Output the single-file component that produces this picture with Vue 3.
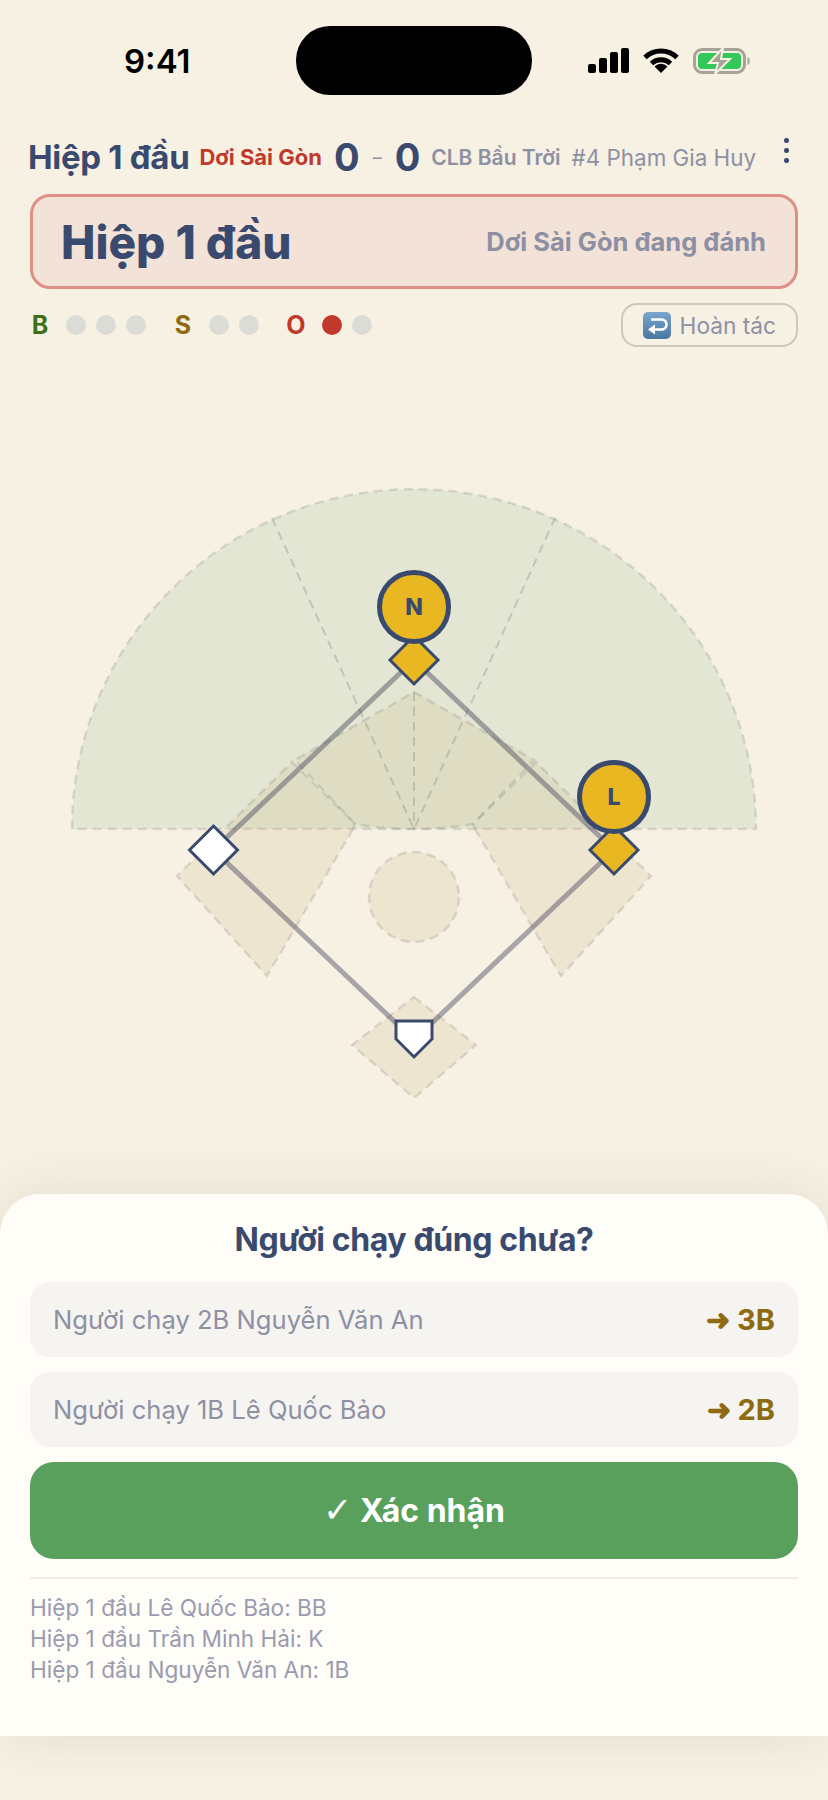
<script setup>
const counts = [
  { label: 'B', cls: 'ball', dots: [0, 0, 0] },
  { label: 'S', cls: 'strike', dots: [0, 0] },
  { label: 'O', cls: 'out', dots: [1, 0] }
]

const runners = [
  { label: 'Người chạy 2B Nguyễn Văn An', to: '➜ 3B' },
  { label: 'Người chạy 1B Lê Quốc Bảo', to: '➜ 2B' }
]

const logs = [
  'Hiệp 1 đầu Lê Quốc Bảo: BB',
  'Hiệp 1 đầu Trần Minh Hải: K',
  'Hiệp 1 đầu Nguyễn Văn An: 1B'
]

// field coordinates, svg starts at y = 360 on the page
const bases = [
  { x: 414, y: 300, on: true },
  { x: 614, y: 490, on: true },
  { x: 213.5, y: 490, on: false }
]
const markers = [
  { x: 414, y: 247, t: 'N' },
  { x: 614, y: 437, t: 'L' }
]
const diamond = (b) => `${b.x},${b.y - 24} ${b.x + 24},${b.y} ${b.x},${b.y + 24} ${b.x - 24},${b.y}`
</script>

<template>
  <div class="screen">
    <div class="status">
      <div class="time-box"><span class="time">9:41</span></div>
      <div class="island"></div>
      <div class="status-icons">
        <svg width="41" height="25" viewBox="0 0 41 25">
          <rect x="0" y="16" width="8" height="9" rx="2" />
          <rect x="11" y="10" width="8" height="15" rx="2" />
          <rect x="22" y="4" width="8" height="21" rx="2" />
          <rect x="33" y="0" width="8" height="25" rx="2" />
        </svg>
        <svg class="wifi" width="36" height="25" viewBox="0 0 36 25">
          <path d="M2 9.5 A23 23 0 0 1 34 9.5" fill="none" stroke="#000" stroke-width="5" />
          <path d="M8.5 15.5 A14 14 0 0 1 27.5 15.5" fill="none" stroke="#000" stroke-width="5" />
          <path d="M18 25 L11.5 18.5 A9 9 0 0 1 24.5 18.5 Z" />
        </svg>
        <svg class="battery" width="60" height="26" viewBox="0 0 60 26">
          <rect x="1.5" y="1.5" width="50" height="23" rx="7.5" fill="none" stroke="#a5a398" stroke-width="3" />
          <rect x="5" y="5" width="43" height="16" rx="4" fill="#34c759" />
          <path d="M54.5 9 C57.5 10 57.5 16 54.5 17 Z" fill="#a5a398" />
          <path d="M30 0 L16 15 H25 L22 26 L37 11 H28 Z" fill="#a5a398" stroke="#f6f1e3" stroke-width="2" />
        </svg>
      </div>
    </div>

    <div class="topbar">
      <span class="inning">Hiệp 1 đầu</span>
      <span class="away">Dơi Sài Gòn</span>
      <span class="score">0</span>
      <span class="dash">–</span>
      <span class="score">0</span>
      <span class="home">CLB Bầu Trời</span>
      <span class="batter">#4 Phạm Gia Huy</span>
      <span class="kebab"><i></i><i></i><i></i></span>
    </div>

    <div class="banner">
      <span class="banner-title">Hiệp 1 đầu</span>
      <span class="banner-sub">Dơi Sài Gòn đang đánh</span>
    </div>

    <div class="count-row">
      <div v-for="c in counts" :key="c.label" class="count" :class="c.cls">
        <span class="count-label">{{ c.label }}</span>
        <span v-for="(d, i) in c.dots" :key="i" class="dot" :class="{ on: d }"></span>
      </div>
      <button class="undo">
        <svg width="28" height="27" viewBox="0 0 28 27">
          <defs>
            <linearGradient id="undoBg" x1="0" y1="0" x2="0" y2="1">
              <stop offset="0" stop-color="#7ba6cc" />
              <stop offset="1" stop-color="#4a76a2" />
            </linearGradient>
          </defs>
          <rect width="28" height="27" rx="5" fill="url(#undoBg)" />
          <path d="M8 7.5 H18.5 A5 5 0 0 1 18.5 17.5 H11" fill="none" stroke="#fff" stroke-width="2.6" />
          <path d="M12 12.5 L5 17.5 L12 22.5 Z" fill="#fff" />
        </svg>
        <span>Hoàn tác</span>
      </button>
    </div>

    <svg class="field" width="828" height="834" viewBox="0 0 828 834">
      <g class="zone">
        <path class="grass" d="M72 469 A342 340 0 0 1 756 469 Z" />
        <path class="dirt" d="M414 332 L534 400 L473 464 Q444 469 414 469 Q384 469 355 464 L295 400 Z" />
        <path class="dirt" d="M353 469 L267 616 L177 516 L292 402 L355 464 Z" />
        <path class="dirt" d="M475 469 L561 616 L651 516 L536 402 L473 464 Z" />
        <circle class="dirt" cx="414" cy="537" r="45" />
        <path class="dirt" d="M414 637 L476 685 L414 738 L352 685 Z" />
        <path class="thin" d="M272 158 L414 469 L555 158" />
        <path class="thin" d="M414 332 V469" />
      </g>

      <path class="baseline" d="M414 300 L614 490 L414 680 L213.5 490 Z" />

      <polygon v-for="b in bases" :key="b.x" class="base" :class="{ taken: b.on }" :points="diamond(b)" />
      <path class="base" d="M396 661 H432 V679 L414 697 L396 679 Z" />

      <g v-for="m in markers" :key="m.t">
        <circle class="marker" :cx="m.x" :cy="m.y" r="34.5" />
        <text class="marker-text" :x="m.x" :y="m.y + 8">{{ m.t }}</text>
      </g>
    </svg>

    <div class="sheet">
      <h2 class="sheet-title">Người chạy đúng chưa?</h2>
      <div v-for="r in runners" :key="r.to" class="runner">
        <span>{{ r.label }}</span>
        <b>{{ r.to }}</b>
      </div>
      <button class="confirm"><span class="check">✓</span> Xác nhận</button>
      <div class="log">
        <div v-for="l in logs" :key="l">{{ l }}</div>
      </div>
    </div>
  </div>
</template>

<style>
body {
  margin: 0;
  background: #f6f1e3;
}
</style>

<style scoped>
.screen {
  width: 828px;
  height: 1800px;
  overflow: hidden;
  background: #f6f1e3;
  font-family: Inter, "Noto Sans", sans-serif;
  color: #3a4a6e;
}

.status {
  display: flex;
  align-items: center;
  height: 69px;
  padding-top: 26px;
}
.time-box {
  width: 296px;
  padding-left: 124px;
  box-sizing: border-box;
}
.time {
  font-size: 33px;
  font-weight: 600;
  color: #000;
}
.island {
  width: 236px;
  height: 69px;
  border-radius: 34px;
  background: #000;
}
.status-icons {
  display: flex;
  align-items: center;
  padding-left: 56px;
}
.wifi {
  margin-left: 14px;
}
.battery {
  margin-left: 14px;
}

.topbar {
  display: flex;
  align-items: center;
  height: 74px;
  padding: 0 0 0 28px;
  margin-top: 25px;
  position: relative;
}
.inning {
  font-size: 33px;
  font-weight: 700;
  letter-spacing: -0.3px;
  white-space: nowrap;
}
.away {
  margin-left: 10px;
  font-size: 22px;
  font-weight: 700;
  color: #c0392b;
  white-space: nowrap;
}
.score {
  font-size: 38px;
  font-weight: 700;
}
.away + .score {
  margin-left: 12px;
}
.dash {
  margin: 0 13px;
  font-size: 18px;
  color: #8e90a3;
}
.home {
  margin-left: 11px;
  font-size: 21px;
  font-weight: 600;
  color: #8e90a3;
  white-space: nowrap;
}
.batter {
  margin-left: 11px;
  font-size: 22.4px;
  color: #8e90a3;
  white-space: nowrap;
}
.kebab {
  position: absolute;
  left: 784px;
  top: 18px;
  display: flex;
  flex-direction: column;
  gap: 5.5px;
}
.kebab i {
  width: 4.5px;
  height: 4.5px;
  border-radius: 50%;
  background: #3a4a6e;
}

.banner {
  display: flex;
  align-items: center;
  justify-content: space-between;
  height: 95px;
  margin: 0 30px;
  padding: 0 29px 0 28px;
  box-sizing: border-box;
  border: 3px solid #dd8f88;
  border-radius: 20px;
  background: #f2e2d8;
}
.banner-title {
  font-size: 46px;
  font-weight: 800;
}
.banner-sub {
  font-size: 25.5px;
  font-weight: 700;
  color: #8d8fa3;
}

.count-row {
  display: flex;
  align-items: center;
  height: 44px;
  margin: 14px 30px 0 28px;
}
.count {
  display: flex;
  align-items: center;
  gap: 10px;
  margin-right: 25px;
}
.count-label {
  width: 24px;
  margin-right: 4px;
  font-size: 25px;
  font-weight: 700;
  text-align: center;
}
.ball .count-label {
  color: #3b7016;
}
.strike .count-label {
  color: #8e6a10;
}
.out .count-label {
  color: #c0392b;
}
.dot {
  width: 20px;
  height: 20px;
  border-radius: 50%;
  background: #dcdcd6;
}
.dot.on {
  background: #c0392b;
}
.undo {
  display: flex;
  align-items: center;
  gap: 9px;
  height: 44px;
  margin-left: auto;
  padding: 0 20px 0 20px;
  box-sizing: border-box;
  border: 2px solid #c9c7c0;
  border-radius: 16px;
  background: transparent;
  font-family: inherit;
  font-size: 22.7px;
  color: #8e90a3;
}

.field {
  display: block;
  margin-top: 13px;
}
.grass {
  fill: #e2e6d2;
}
.dirt {
  fill: rgba(205, 175, 125, 0.18);
}
.grass,
.dirt {
  stroke: rgba(110, 110, 110, 0.2);
  stroke-width: 2.5;
  stroke-dasharray: 9 6;
}
.thin {
  fill: none;
  stroke: rgba(110, 110, 110, 0.28);
  stroke-width: 2;
  stroke-dasharray: 9 6;
}
.baseline {
  fill: none;
  stroke: rgba(60, 60, 85, 0.42);
  stroke-width: 5;
}
.base {
  fill: #fff;
  stroke: #3a4a6e;
  stroke-width: 3;
}
.base.taken {
  fill: #e8b722;
}
.marker {
  fill: #e8b722;
  stroke: #3a4a6e;
  stroke-width: 5;
}
.marker-text {
  fill: #3a4a6e;
  font-size: 23px;
  font-weight: 800;
  text-anchor: middle;
}

.sheet {
  height: 542px;
  padding: 0 30px;
  box-sizing: border-box;
  border-radius: 40px 40px 0 0;
  background: #fffdf8;
  box-shadow: 0 0 60px rgba(60, 50, 30, 0.1);
}
.sheet-title {
  margin: 0;
  padding: 27px 0 23px;
  font-size: 32px;
  font-weight: 700;
  line-height: 38px;
  text-align: center;
  letter-spacing: -0.4px;
}
.runner {
  display: flex;
  align-items: center;
  justify-content: space-between;
  height: 75px;
  margin-bottom: 15px;
  padding: 0 23px;
  border-radius: 20px;
  background: #f5f4f0;
  font-size: 25.6px;
  color: #8e90a3;
}
.runner b {
  font-size: 29px;
  font-weight: 700;
  color: #8e6a10;
}
.confirm {
  display: block;
  width: 100%;
  height: 97px;
  border: 0;
  border-radius: 24px;
  background: #58a05c;
  font-family: inherit;
  font-size: 32px;
  font-weight: 700;
  color: #fff;
}
.check {
  font-family: "DejaVu Sans", sans-serif;
  font-size: 35px;
  font-weight: 700;
  line-height: 1;
}
.log {
  margin-top: 18px;
  padding-top: 13px;
  border-top: 2px solid #eeede8;
  font-size: 22.6px;
  line-height: 31px;
  color: #9a9bae;
}
</style>
